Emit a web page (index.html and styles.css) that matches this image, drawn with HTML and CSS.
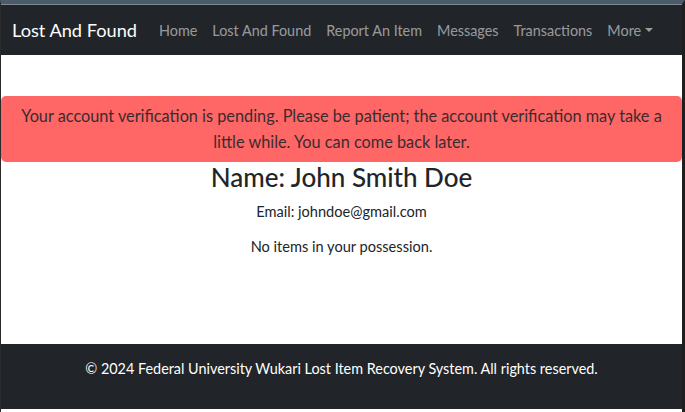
FILE: index.html
```html
<!DOCTYPE html>
<html lang="en">
<head>
<meta charset="utf-8">
<title>Lost And Found</title>
<link rel="stylesheet" href="styles.css">
</head>
<body>
<div class="window">
  <nav class="navbar">
    <a class="brand" href="#">Lost And Found</a>
    <ul class="nav">
      <li><a href="#">Home</a></li>
      <li><a href="#">Lost And Found</a></li>
      <li><a href="#">Report An Item</a></li>
      <li><a href="#">Messages</a></li>
      <li><a href="#">Transactions</a></li>
      <li><a href="#" class="dropdown">More<span class="caret"></span></a></li>
    </ul>
  </nav>
  <main class="content">
    <div class="alert">Your account verification is pending. Please be patient; the account verification may take a little while. You can come back later.</div>
    <h2 class="name">Name: John Smith Doe</h2>
    <p class="email">Email: johndoe@gmail.com</p>
    <p class="empty">No items in your possession.</p>
  </main>
  <footer class="footer">
    <p>© 2024 Federal University Wukari Lost Item Recovery System. All rights reserved.</p>
  </footer>
</div>
</body>
</html>
```
FILE: styles.css
```css
* { box-sizing: border-box; }
html, body { margin: 0; padding: 0; background: #ffffff; }
body {
  font-family: Lato, "Noto Sans", sans-serif;
  color: #212529;
  height: 412px;
  overflow: hidden;
}
.window {
  height: 412px;
  display: flex;
  flex-direction: column;
  border-top: 4px solid #4b5b69;
  border-left: 1px solid #2a2a2a;
  border-right: 3px solid #1f1f1f;
  padding-bottom: 3px;
}
.navbar {
  border-top: 1px solid #7b8a95;
  background: #212529;
  height: 51px;
  display: flex;
  align-items: center;
  padding: 0 11px;
}
.brand {
  color: #ffffff;
  text-decoration: none;
  font-size: 18.2px;
  margin-right: 22px;
}
.nav {
  list-style: none;
  margin: 0;
  padding: 0;
  display: flex;
  gap: 15px;
}
.nav a {
  color: rgba(255,255,255,0.55);
  text-decoration: none;
  font-size: 14.4px;
  display: flex;
  align-items: center;
}
.caret {
  display: inline-block;
  margin-left: 4px;
  border-top: 4.5px solid rgba(255,255,255,0.55);
  border-left: 4px solid transparent;
  border-right: 4px solid transparent;
}
.content {
  flex: 1;
  padding-top: 41px;
  text-align: center;
}
.alert {
  background: #ff6666;
  color: #3a2c2e;
  border-radius: 5px;
  padding: 7px 14px;
  font-size: 16.3px;
  line-height: 26px;
  margin: 0;
}
.name {
  font-size: 26px;
  font-weight: 500;
  margin: 0 0 9px 0;
  line-height: 30px;
}
.email, .empty {
  font-size: 14.6px;
  margin: 0 0 14px 0;
  line-height: 21px;
}
.footer {
  background: #212529;
  color: #ffffff;
  height: 65px;
  display: flex;
  align-items: flex-start;
  justify-content: center;
  padding-top: 15px;
  font-size: 14.4px;
  line-height: 20px;
}
.footer p { margin: 0; }
```
